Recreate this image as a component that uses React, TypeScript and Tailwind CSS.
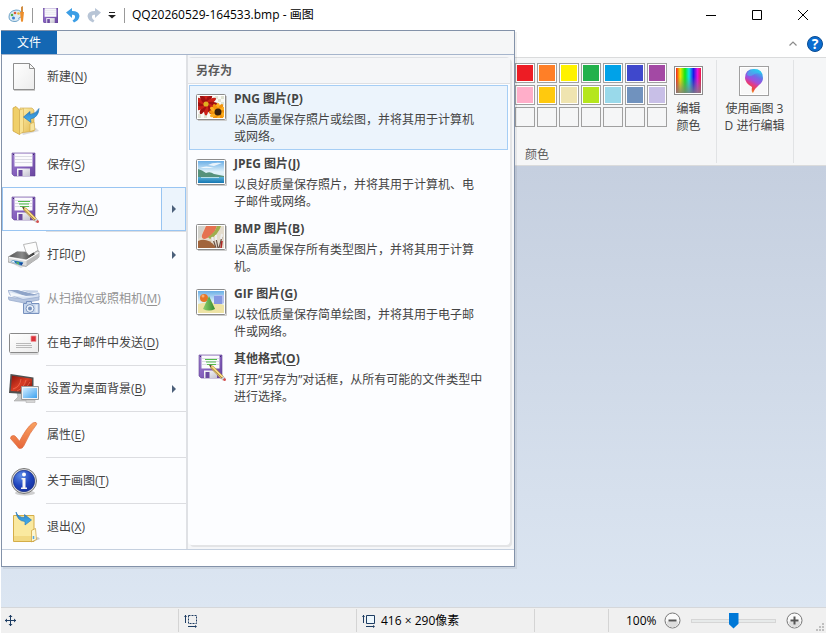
import type { ReactNode } from "react";

const swatches: (string | null)[] = [
  "bg-[#ed1c24]", "bg-[#ff7f27]", "bg-[#fff200]", "bg-[#22b14c]", "bg-[#00a2e8]", "bg-[#3f48cc]", "bg-[#a349a4]",
  "bg-[#ffaec9]", "bg-[#ffc90e]", "bg-[#efe4b0]", "bg-[#b5e61d]", "bg-[#99d9ea]", "bg-[#7092be]", "bg-[#c8bfe7]",
  null, null, null, null, null, null, null,
];

function Gradients() {
  return (
    <svg className="absolute size-0" aria-hidden="true">
      <defs>
        <linearGradient id="purple" x1="0" y1="0" x2="1" y2="1"><stop stopColor="#a184cf" /><stop offset=".5" stopColor="#8560bd" /><stop offset="1" stopColor="#6b479f" /></linearGradient>
        <linearGradient id="silver" x1="0" y1="0" x2="1" y2="1"><stop stopColor="#ffffff" /><stop offset="1" stopColor="#c4c2cf" /></linearGradient>
        <linearGradient id="paper" x1="0" y1="0" x2="1" y2="1"><stop stopColor="#ffffff" /><stop offset="1" stopColor="#ececec" /></linearGradient>
        <linearGradient id="folder" x1="0" y1="0" x2="1" y2="1"><stop stopColor="#fdf0b0" /><stop offset="1" stopColor="#e3b94e" /></linearGradient>
        <linearGradient id="blueArrow" x1="0" y1="0" x2="0" y2="1"><stop stopColor="#2b7cc4" /><stop offset="1" stopColor="#45b4f0" /></linearGradient>
        <linearGradient id="check" x1="0" y1="0" x2="0" y2="1"><stop stopColor="#f9a260" /><stop offset="1" stopColor="#e6663a" /></linearGradient>
        <radialGradient id="info" cx=".35" cy=".25" r=".8"><stop stopColor="#5c8be6" /><stop offset=".6" stopColor="#1f44bd" /><stop offset="1" stopColor="#1733a0" /></radialGradient>
        <linearGradient id="dark" x1="0" y1="0" x2="1" y2="0"><stop stopColor="#555" /><stop offset=".5" stopColor="#8a8a8a" /><stop offset="1" stopColor="#333" /></linearGradient>
        <linearGradient id="red" x1="0" y1="0" x2="1" y2="1"><stop stopColor="#8c130b" /><stop offset=".5" stopColor="#d93d24" /><stop offset="1" stopColor="#6e0d08" /></linearGradient>
        <linearGradient id="screen" x1="0" y1="0" x2="1" y2="1"><stop stopColor="#d2edff" /><stop offset="1" stopColor="#3ea2ef" /></linearGradient>
        <linearGradient id="sky" x1="0" y1="0" x2="0" y2="1"><stop stopColor="#6aaee6" /><stop offset=".5" stopColor="#e3f3fa" /><stop offset="1" stopColor="#cfe8f3" /></linearGradient>
        <linearGradient id="sea" x1="0" y1="0" x2="0" y2="1"><stop stopColor="#5ab2d8" /><stop offset="1" stopColor="#1677b3" /></linearGradient>
        <linearGradient id="cone" x1="0" y1="0" x2="1" y2="0"><stop stopColor="#8fd070" /><stop offset="1" stopColor="#358c2d" /></linearGradient>
        <linearGradient id="rainbow" x1="0" y1="0" x2="1" y2="0"><stop stopColor="#f02020" /><stop offset=".17" stopColor="#f5e500" /><stop offset=".36" stopColor="#12e512" /><stop offset=".52" stopColor="#10e5e8" /><stop offset=".7" stopColor="#1a16e8" /><stop offset=".86" stopColor="#e612d8" /><stop offset="1" stopColor="#f01840" /></linearGradient>
        <linearGradient id="fade" x1="0" y1="0" x2="0" y2="1"><stop stopColor="#808080" stopOpacity="0" /><stop offset=".35" stopColor="#808080" stopOpacity="0" /><stop offset="1" stopColor="#808080" stopOpacity=".85" /></linearGradient>
        <linearGradient id="drop" x1=".7" y1="0" x2=".3" y2="1"><stop stopColor="#1ad0f0" /><stop offset=".3" stopColor="#6f6ce8" /><stop offset=".5" stopColor="#a34ddb" /><stop offset=".65" stopColor="#e23a86" /><stop offset=".82" stopColor="#ec4a38" /><stop offset="1" stopColor="#f7b52b" /></linearGradient>
      </defs>
    </svg>
  );
}

function Icon({ children }: { children: ReactNode }) {
  return <svg viewBox="0 0 32 32" className="size-8 shrink-0" aria-hidden="true">{children}</svg>;
}

function Floppy() {
  return (
    <g>
      <path d="M4 4h23v23H6l-2-2z" fill="url(#purple)" stroke="#5f3f92" strokeWidth=".6" />
      <path d="M6.500 4.500h18v13h-18z" fill="#fbfbfd" />
      <path d="M7 7.500h17M7 10.500h17M7 13.500h17" stroke="#dcdce4" />
      <path d="M9 19.500h13v7.500H9z" fill="url(#silver)" />
      <path d="M10.500 21h4v6h-4z" fill="#6b4aa0" />
      <path d="M5 5.500h1M25 5.500h1" stroke="#3d2768" />
    </g>
  );
}

function FloppyPencil() {
  return (
    <g>
      <Floppy />
      <path d="M10 8.500h12M11 11h10M12 13.500h9" stroke="#53bb4c" strokeWidth="1.200" />
      <path d="M14.500 14l3.800 1.200 10.200 10.300-2.300 2.300L16 17.500z" fill="#f6d980" stroke="#9b7126" strokeWidth=".5" />
      <path d="M15.500 16l11.500 11" stroke="#6c4a18" strokeWidth=".6" />
      <path d="M14.500 14l2.200.7-1.300 1.400z" fill="#222" />
      <path d="M26.200 27.800l2.300-2.300 1.300 1.300-2.300 2.300z" fill="#d3d6db" stroke="#999" strokeWidth=".3" />
      <path d="M27.500 29.100l2.300-2.300q2 1.600.9 2.600-1.200 1.200-3.200-.3z" fill="#d2504f" />
    </g>
  );
}

const NewIcon = () => (
  <Icon>
    <path d="M6 29.500h21" stroke="#ccc" />
    <path d="M5.500 2.500h16l5 5v21h-21z" fill="url(#paper)" stroke="#8f8f8f" />
    <path d="M21.500 2.500v5h5z" fill="#f7f7f7" stroke="#8f8f8f" strokeLinejoin="round" />
  </Icon>
);

const OpenIcon = () => (
  <Icon>
    <path d="M13 26l15-3 3 3-16 4z" fill="#b9b9b9" opacity=".5" />
    <path d="M12 3h12l2 2v21l-14 2z" fill="url(#folder)" stroke="#cfa543" strokeWidth=".6" />
    <path d="M5 3l3-1.500 3.500 3.500v24.500L5 26z" fill="#f0cf69" stroke="#c99c33" strokeWidth=".7" />
    <path d="M11.500 5l4-1.500v23l-4 3z" fill="#f8e294" stroke="#cfa543" strokeWidth=".5" />
    <path d="M22 19l4-2 1 8-5 1.500z" fill="#f7e5a0" stroke="#c99c33" strokeWidth=".5" />
    <path d="M15.500 12l6.500-5.500v3q5.500-.5 9-6-.5 9-8.500 10.500l.5 3.500z" fill="url(#blueArrow)" stroke="#1f6db0" strokeWidth=".6" />
  </Icon>
);

const SaveIcon = () => <Icon><Floppy /></Icon>;
const SaveAsIcon = () => <Icon><FloppyPencil /></Icon>;

const PrintIcon = () => (
  <Icon>
    <path d="M3 24l10 5 17-9-2-4z" fill="#bbb" opacity=".5" />
    <path d="M15.500 5.500l12.500-2.500 2 8.500-9 5.500-3-4z" fill="#fdfdfd" stroke="#9b9b9b" strokeWidth=".7" />
    <path d="M0 18l9-5h9l3 4 8-5h2v6l-13 9.500L0 23z" fill="#dcdcdc" stroke="#7c7c7c" strokeWidth=".6" />
    <path d="M1 17.500l8-5 8.500.5 3 3.500 5-3 1.500 2-8.500 5z" fill="url(#dark)" />
    <path d="M1 18.500l17 3 12.500-8" fill="none" stroke="#fff" />
    <path d="M18.500 22v5l12-8.500v-4z" fill="#b9b9b9" />
    <path d="M2 22.500l3-1.500 10.500 2-2 4z" fill="#1f74b4" stroke="#e8e8e8" strokeWidth=".5" />
    <path d="M3 22.500l3-.8 1 2.300z" fill="#f2f8ff" /><path d="M8 23l3 .5-.5 2.300z" fill="#6bc73e" /><path d="M12 24l3 0-1.500 2.500z" fill="#1a3f9a" />
  </Icon>
);

const ScannerIcon = () => (
  <Icon>
    <path d="M0 14l8 1 23-2v4l-15 3L1 17z" fill="#b7c6e0" stroke="#94a7ca" strokeWidth=".7" />
    <path d="M0 7.500h9l16 4.500 6-2v4l-16 2.500L2 12z" fill="#d9e3f2" stroke="#93a7cb" strokeWidth=".7" />
    <path d="M1 7l8 0 21 5-13 1z" fill="#8fa4c8" />
    <path d="M2 9.500l21 4.500-20-1z" fill="#f3f7fc" />
    <path d="M13 7l17 .5v2l-8 .5z" fill="#c3d0e5" />
    <path d="M15.500 20.500h3v-2h5v2h7.500v10H15.500z" fill="#c7d6ec" stroke="#7791be" />
    <circle cx="22" cy="25.500" r="4" fill="#eef4fb" stroke="#7d96c0" /><circle cx="22" cy="25.500" r="2" fill="#7690bb" />
    <path d="M27.500 22h2v7h-2z" fill="#e6eef8" />
  </Icon>
);

const MailIcon = () => (
  <Icon>
    <path d="M2 27h28.500" stroke="#bbb" />
    <rect x="1.500" y="6.500" width="29" height="19" rx="1" fill="url(#paper)" stroke="#898989" />
    <path d="M23 9h5v5.500h-5z" fill="#d9333b" stroke="#ef9799" strokeWidth=".7" />
    <path d="M8 16.500h15M8 18.500h16M8 20.500h16" stroke="#aaa" strokeWidth=".8" />
  </Icon>
);

const DesktopIcon = () => (
  <Icon>
    <path d="M9 20h7v5l3 3H6l4-4z" fill="#c6c6c6" stroke="#999" strokeWidth=".5" />
    <path d="M2.500 1l23 3.500v17L1 20z" fill="#505050" />
    <path d="M4 2.800l20 3v13.500L2.700 18z" fill="url(#red)" />
    <path d="M5 16q7-2 8-10M9 18q7-3 9-11M14 18q5-3 8-9" fill="none" stroke="#ff8262" opacity=".7" strokeWidth=".8" />
    <path d="M18 27h9v2.500h-9z" fill="#d6d6d6" stroke="#aaa" strokeWidth=".5" />
    <path d="M13.500 13.500h17v13h-17z" fill="#f1f3f5" stroke="#9a9a9a" />
    <path d="M15 15h14v10H15z" fill="url(#screen)" />
  </Icon>
);

const CheckIcon = () => (
  <Icon>
    <path d="M2.500 19.500q0-3 3-3 1.500 0 2.500 1.500l3.500 4.200Q19 8 24.500 4.200q1.500-1 3.500-.7 1 .6.500 2Q22 13 16 26.500q-1.500 3.500-4.500 3-1.500-.5-2.500-2.500z" fill="url(#check)" stroke="#dc6a3c" strokeWidth=".7" />
  </Icon>
);

const InfoIcon = () => (
  <Icon>
    <ellipse cx="17" cy="28" rx="10" ry="2.500" fill="#b0b0b0" opacity=".6" />
    <circle cx="16" cy="16" r="12.500" fill="#dedede" stroke="#777" />
    <circle cx="16" cy="16" r="10.700" fill="url(#info)" stroke="#1a2f83" strokeWidth=".7" />
    <circle cx="16" cy="9.500" r="2" fill="#fff" />
    <path d="M13.500 13h4v9.500h1.500V24h-6v-1.500h1.500V14.500h-1z" fill="#f5f5f5" />
  </Icon>
);

const ExitIcon = () => (
  <Icon>
    <path d="M20 29l10-3 2 2-8 3z" fill="#aaa" opacity=".6" />
    <path d="M5.500 4.500H22l4 0v26H5.500z" fill="#fae9a0" stroke="#d4ad48" />
    <path d="M6 25h17v5H6z" fill="#eed176" opacity=".7" />
    <path d="M23.500 19.500l4-2 1 11-5 2.500z" fill="#fdf6d0" stroke="#ca9e36" strokeWidth=".7" />
    <path d="M25.500 25v3" stroke="#55a7e6" strokeWidth="1.500" />
    <path d="M8 1q2 5.500 8.500 5.500V3.500l7 5.500-6.500 5v-3.500Q9 10 8 1z" fill="url(#blueArrow)" stroke="#2273b5" strokeWidth=".6" />
  </Icon>
);

function Thumb({ children }: { children: ReactNode }) {
  return (
    <Icon>
      <path d="M2 26.500h28.500V2" stroke="#ccc" fill="none" />
      <rect x=".5" y=".5" width="29" height="25" rx="1" fill="#fff" stroke="#8c8c8c" />
      <svg x="2" y="2" width="26" height="22" viewBox="0 0 26 22">{children}</svg>
    </Icon>
  );
}

const petals = [0, 30, 60, 90, 120, 150, 180, 210, 240, 270, 300, 330];

const PngIcon = () => (
  <Thumb>
    <path d="M0 0h26v22H0z" fill="#f8f8f4" />
    <path d="M17 0h3v3h-3zM23 0h3v3h-3zM20 3h3v3h-3zM17 6h3v3h-3zM23 6h3v3h-3zM0 18h3v4H0zM6 18h3v4H6z" fill="#dfe3d3" />
    {petals.map((a) => <ellipse key={a} cx="8" cy="2.500" rx="2.200" ry="6" fill={a % 60 ? "#a01010" : "#cb2018"} transform={`rotate(${a} 8 8)`} />)}
    <circle cx="8" cy="8" r="2.600" fill="#e0b020" />
    {petals.map((a) => <ellipse key={a} cx="20" cy="11.500" rx="2" ry="4.500" fill={a % 60 ? "#f2930c" : "#fdb022"} transform={`rotate(${a} 20 16)`} />)}
    <circle cx="20" cy="16" r="3.500" fill="#38200c" />
  </Thumb>
);

const JpegIcon = () => (
  <Thumb>
    <path d="M0 0h26v22H0z" fill="url(#sky)" />
    <path d="M10 4q5-3 14-2l-8 3zM2 7q6-3 14 0z" fill="#fff" opacity=".8" />
    <path d="M0 8q4 1 8 4 4-2 8 1 5 1 10 2v2H0z" fill="#56927b" />
    <path d="M0 16h26v6H0z" fill="url(#sea)" />
    <path d="M3 16.500h18" stroke="#b5dfe9" />
  </Thumb>
);

const BmpIcon = () => (
  <Thumb>
    <path d="M0 0h26v22H0z" fill="#e4dccd" />
    <path d="M0 0h7L3 11l-3 2z" fill="#d3d3cd" />
    <path d="M8 0h11q-3 10-12 13-4 0-3-4z" fill="#e57251" />
    <path d="M19 0h4q-3 9-11 13l-2-2q7-4 9-11z" fill="#9eae4c" />
    <path d="M0 15q9-4 17 5v2H0z" fill="#a1643c" />
    <path d="M15 13l3 9M18 12l2 10M24 11l-3 11" stroke="#695045" strokeWidth="1.200" />
    <path d="M14 11l1.500 4M18 9v5M24 8l-1 5" stroke="#eee" strokeWidth="2" />
    <path d="M24 15l-1 7" stroke="#ac2625" strokeWidth="1.600" />
  </Thumb>
);

const GifIcon = () => (
  <Thumb>
    <path d="M0 0h26v22H0z" fill="url(#sky)" />
    <path d="M0 13q13-4 26 1v8H0z" fill="#eee3a5" />
    <path d="M16 5h8v8h-8z" fill="#8598e2" /><path d="M16 5l1-1h9l-2 1zM24 5l2-1v8l-2 1z" fill="#b3c0ef" />
    <circle cx="6" cy="7" r="4" fill="#e67528" /><circle cx="5" cy="5" r="1.500" fill="#f8ae72" />
    <path d="M11 5l6 13q-6 3-12 0z" fill="url(#cone)" />
  </Thumb>
);

const OtherIcon = () => <Icon><g transform="translate(-1 -3)"><FloppyPencil /></g></Icon>;

type Item = { label: string; hot: string; icon: () => ReactNode; arrow?: boolean; active?: boolean; disabled?: boolean; sep?: boolean };

const items: Item[] = [
  { label: "新建", hot: "N", icon: NewIcon },
  { label: "打开", hot: "O", icon: OpenIcon },
  { label: "保存", hot: "S", icon: SaveIcon },
  { label: "另存为", hot: "A", icon: SaveAsIcon, arrow: true, active: true, sep: true },
  { label: "打印", hot: "P", icon: PrintIcon, arrow: true },
  { label: "从扫描仪或照相机", hot: "M", icon: ScannerIcon, disabled: true },
  { label: "在电子邮件中发送", hot: "D", icon: MailIcon, sep: true },
  { label: "设置为桌面背景", hot: "B", icon: DesktopIcon, arrow: true, sep: true },
  { label: "属性", hot: "E", icon: CheckIcon, sep: true },
  { label: "关于画图", hot: "T", icon: InfoIcon, sep: true },
  { label: "退出", hot: "X", icon: ExitIcon },
];

const formats = [
  { label: "PNG 图片", hot: "P", icon: PngIcon, text: "以高质量保存照片或绘图，并将其用于计算机或网络。", active: true },
  { label: "JPEG 图片", hot: "J", icon: JpegIcon, text: "以良好质量保存照片，并将其用于计算机、电子邮件或网络。" },
  { label: "BMP 图片", hot: "B", icon: BmpIcon, text: "以高质量保存所有类型图片，并将其用于计算机。" },
  { label: "GIF 图片", hot: "G", icon: GifIcon, text: "以较低质量保存简单绘图，并将其用于电子邮件或网络。" },
  { label: "其他格式", hot: "O", icon: OtherIcon, text: "打开“另存为”对话框，从所有可能的文件类型中进行选择。" },
];

function Label({ label, hot }: { label: string; hot: string }) {
  return <span>{label}(<span className="underline underline-offset-2">{hot}</span>)</span>;
}

function MenuItem({ item }: { item: Item }) {
  const Glyph = item.icon;
  return (
    <li>
      <button
        disabled={item.disabled}
        className={`flex h-11 w-full items-center border text-left ${item.active ? "border-[#99c5f2]" : "border-transparent"} ${item.disabled ? "text-[#939393]" : ""}`}
      >
        <span className="flex flex-1 items-center gap-[7px] pl-[5px]">
          <Glyph />
          <Label label={item.label} hot={item.hot} />
        </span>
        {item.arrow && (
          <span className={`flex h-full w-6 items-center justify-center border-l ${item.active ? "border-[#99c5f2] bg-[#ecf4fc]" : "border-transparent"}`}>
            <svg viewBox="0 0 4 8" className="h-2 w-1" aria-hidden="true"><path d="M0 0l4 4-4 4z" fill="#4c607a" /></svg>
          </span>
        )}
      </button>
      {item.sep && <div className="ml-11 h-0.5 border-t border-[#dcdde1]" />}
    </li>
  );
}

function FileMenu() {
  return (
    <nav className="absolute top-[30px] left-px w-[514px] border border-[#8392a9] bg-[#fcfdff] text-[#444] shadow-[2px_2px_0_#0000000f]">
      <div className="flex h-6 border-b border-[#a6b5cc] bg-[#f5f6f7]">
        <button className="-ml-px w-14 bg-[#1467b3] text-white">文件</button>
      </div>
      <div className="flex border-b border-[#c5d0df]">
        <ul className="w-[184px]">
          {items.map((item) => <MenuItem key={item.hot} item={item} />)}
        </ul>
        <div className="flex-1 border-l-2 border-[#dfe1e5] bg-[#f5f6f8] pt-0.5 pr-1 pb-1">
          <section className="h-full rounded-sm border-t border-[#dfe1e5] bg-[#fcfdff] shadow-[2px_2px_0_#e3e4e6]">
            <h2 className="h-[26px] border-b border-[#dfe0e3] bg-[#f5f6f8] pl-2 leading-[26px] font-bold text-[#5a5a5a]">另存为</h2>
            <ul className="pt-px pr-0.5 pl-px">
              {formats.map(({ label, hot, icon: Glyph, text, active }) => (
                <li key={label}>
                  <button className={`flex h-[65px] w-full items-start gap-1.5 border pl-1.5 text-left ${active ? "border-[#a6cef5] bg-[#ecf4fc]" : "border-transparent"}`}>
                    <span className="pt-2"><Glyph /></span>
                    <span className="flex w-[250px] flex-col pt-1">
                      <strong className="leading-[17px]"><Label label={label} hot={hot} /></strong>
                      <span className="mt-1 leading-[17px]">{text}</span>
                    </span>
                  </button>
                </li>
              ))}
            </ul>
          </section>
        </div>
      </div>
      <div className="h-4 bg-white" />
    </nav>
  );
}

function TitleBar() {
  return (
    <header className="flex h-[30px] items-center bg-white pr-px pl-2 text-black">
      <svg viewBox="0 0 18 18" className="size-[18px]" aria-hidden="true">
        <path d="M1 11Q1 5 8 4q6 0 6 5 0 2-2 2.500-2 0-1 2-1 2-4 2-6 0-6-4.500z" fill="#ddebf5" stroke="#6ba1c8" />
        <circle cx="4" cy="9" r="1.300" fill="#4cae4c" /><circle cx="7" cy="7" r="1.300" fill="#e05b38" /><circle cx="10.500" cy="7.500" r="1.300" fill="#eab52e" /><circle cx="5.500" cy="12" r="1.500" fill="#3c7fd0" />
        <path d="M13 1l2-1v6h-2z" fill="#d18d41" /><path d="M12 6h4l-1 9q-1 2-2 0z" fill="#ed8e2c" />
      </svg>
      <span className="ml-1.5 h-[15px] w-px bg-[#999]" />
      <button className="ml-2.5" aria-label="保存"><svg viewBox="4 4 23 23" className="size-[15px]"><Floppy /></svg></button>
      <button className="ml-2" aria-label="撤消">
        <svg viewBox="0 0 14 16" className="h-4 w-3.5"><path d="M0 5.500L6 1v3q7 0 7.500 5Q13 13.500 8 15.500L6.500 13.500q3-2 2.500-4.500-.5-1.500-3-1.300V11z" fill="#3c9ee5" /></svg>
      </button>
      <button className="ml-[7px]" aria-label="重做">
        <svg viewBox="0 0 14 16" className="h-4 w-3.5"><path d="M14 5.500L8 1v3Q1 4 .5 9 1 13.500 6 15.500l1.500-2q-3-2-2.500-4.500.5-1.500 3-1.300V11z" fill="#b8c5d6" /></svg>
      </button>
      <button className="ml-[7px]" aria-label="自定义快速访问工具栏">
        <svg viewBox="0 0 8 8" className="size-2"><path d="M1 1.500h6" stroke="#222" /><path d="M0 4h8L4 7.500z" fill="#222" /></svg>
      </button>
      <span className="ml-2 h-[15px] w-px bg-[#999]" />
      <h1 className="ml-[7px] flex-1">QQ20260529-164533.bmp - 画图</h1>
      <div className="flex h-full">
        <button className="flex w-[46px] items-center justify-center" aria-label="最小化"><svg viewBox="0 0 10 10" className="size-2.5"><path d="M0 5.500h10" stroke="#000" /></svg></button>
        <button className="flex w-[46px] items-center justify-center" aria-label="最大化"><svg viewBox="0 0 10 10" className="size-2.5"><path d="M.5.5h9v9h-9z" fill="none" stroke="#000" /></svg></button>
        <button className="flex w-[46px] items-center justify-center" aria-label="关闭"><svg viewBox="0 0 10 10" className="size-2.5"><path d="M0 0l10 10M10 0L0 10" stroke="#000" /></svg></button>
      </div>
    </header>
  );
}

function Ribbon() {
  return (
    <>
      <div className="flex h-[27px] items-center justify-end gap-2.5 bg-white pr-1">
        <button aria-label="折叠功能区"><svg viewBox="0 0 8 5" className="h-[5px] w-2"><path d="M.5 4.500L4 1l3.500 3.500" fill="none" stroke="#8b8b8b" strokeWidth="1.200" /></svg></button>
        <button className="size-4 rounded-full border border-[#0a4c92] bg-[#0a6cd0] text-sm leading-[14px] font-bold text-white" aria-label="帮助">?</button>
      </div>
      <div className="mx-px flex h-[109px] border-y border-[#dadbdc] bg-[#f5f6f7] py-0.5 pl-[514px] text-[#444]">
        <section className="flex w-[202px] flex-col justify-between border-r border-[#e1e3e5]">
          <div className="flex gap-[7px]">
            <div className="grid h-16 grid-cols-7 gap-0.5 pt-[3px]">
              {swatches.map((color, i) => (
                <button key={i} aria-label={`颜色 ${i + 1}`} className="size-5 border border-[#a0a0a0] p-px">
                  <span className={`block size-full ${color ? `outline-1 outline-white ${color}` : ""}`} />
                </button>
              ))}
            </div>
            <button className="flex flex-col items-center gap-[5px] pt-1.5 leading-[17px]">
              <svg viewBox="0 0 29 29" className="size-[29px]" aria-hidden="true"><rect x=".5" y=".5" width="28" height="28" fill="#fff" stroke="#8c8c8c" /><path d="M2 2h25v25H2z" fill="url(#rainbow)" /><path d="M2 2h25v25H2z" fill="url(#fade)" /></svg>
              <span className="w-6">编辑颜色</span>
            </button>
          </div>
          <h2 className="pl-2.5 leading-[17px] text-[#5a5a5a]">颜色</h2>
        </section>
        <section className="flex w-[77px] justify-center border-r border-[#e1e3e5] pt-1.5 pr-px">
          <button className="flex flex-col items-center gap-1 leading-[17px]">
            <svg viewBox="0 0 30 30" className="size-[30px] shrink-0" aria-hidden="true">
              <rect x=".5" y=".5" width="29" height="29" fill="#f8f8f8" stroke="#a0a0a0" /><path d="M1.500 1.500h27v27h-27z" fill="none" stroke="#fff" />
              <path d="M15 3q9 0 9 9 0 4-4 7-4 3-6 8-2-1-1-6-7-4-7-9 0-9 9-9z" fill="url(#drop)" />
              <path d="M12 4q7-3 11 4-6-2-9 1-3 2-6 0 0-3 4-5z" fill="#30d4f2" opacity=".45" />
            </svg>
            <span className="text-center whitespace-nowrap">使用画图 3<br />D 进行编辑</span>
          </button>
        </section>
      </div>
    </>
  );
}

function StatusBar() {
  return (
    <footer className="mx-px mb-px flex h-[26px] border-t border-[#d5d7da] bg-[#f0f0f0] text-black">
      <div className="my-px flex w-[178px] items-center border-r border-[#d4d4d4] pl-1">
        <svg viewBox="0 0 11 11" className="size-[11px]" aria-hidden="true"><path d="M5.500 0v11M0 5.500h11" stroke="#1e3d63" /><path d="M3.500 2l2-2 2 2zM3.500 9l2 2 2-2zM2 3.500l-2 2 2 2zM9 3.500l2 2-2 2z" fill="#1e3d63" /></svg>
      </div>
      <div className="my-px flex w-[178px] items-center border-r border-[#d4d4d4] pl-[5px]">
        <SizeIcon dashed />
      </div>
      <div className="my-px flex w-[178px] items-center gap-[5px] border-r border-[#d4d4d4] pl-[5px]">
        <SizeIcon />
        <span>416 × 290像素</span>
      </div>
      <div className="my-px flex-1 border-r border-[#d4d4d4]" />
      <div className="flex w-[217px] items-center pl-[17px]">
        <label htmlFor="zoom" className="w-[38px]">100%</label>
        <button aria-label="缩小" className="flex"><ZoomGlyph /></button>
        <input
          id="zoom"
          type="range"
          defaultValue={50}
          className="mx-2.5 h-4 w-[85px] appearance-none bg-transparent [&::-webkit-slider-runnable-track]:h-1 [&::-webkit-slider-runnable-track]:border [&::-webkit-slider-runnable-track]:border-[#d6d6d6] [&::-webkit-slider-runnable-track]:bg-[#e7eaea] [&::-webkit-slider-thumb]:-mt-[7px] [&::-webkit-slider-thumb]:h-4 [&::-webkit-slider-thumb]:w-2.5 [&::-webkit-slider-thumb]:appearance-none [&::-webkit-slider-thumb]:bg-[#0078d7] [&::-webkit-slider-thumb]:[clip-path:polygon(0_0,100%_0,100%_70%,50%_100%,0_70%)]"
        />
        <button aria-label="放大" className="flex"><ZoomGlyph plus /></button>
        <svg viewBox="0 0 8 8" className="mr-0.5 mb-0.5 ml-auto size-2 self-end" aria-hidden="true"><path d="M6 0h2v2H6zM3 3h2v2H3zM6 3h2v2H6zM0 6h2v2H0zM3 6h2v2H3zM6 6h2v2H6z" fill="#bfbfbf" /></svg>
      </div>
    </footer>
  );
}

function SizeIcon({ dashed }: { dashed?: boolean }) {
  return (
    <svg viewBox="0 0 14 14" className="size-3.5" aria-hidden="true">
      <path d="M1.500 1v8M4 12.500h8" stroke="#1e3d63" /><path d="M0 3l1.500-2L3 3zM11 11l2 1.500-2 1.500z" fill="#1e3d63" />
      <path d="M4.500 1.500h8v8h-8z" fill={dashed ? "none" : "#edf7fd"} stroke="#1e3d63" strokeDasharray={dashed ? "2 1" : undefined} />
    </svg>
  );
}

function ZoomGlyph({ plus }: { plus?: boolean }) {
  return (
    <svg viewBox="0 0 17 17" className="size-[17px]" aria-hidden="true">
      <circle cx="8.500" cy="8.500" r="7.500" fill="#fafafa" stroke="#777" />
      <path d="M2.500 9.500h12a6 6 0 0 1-12 0z" fill="#ddd" />
      <path d={plus ? "M4.500 8.500h8M8.500 4.500v8" : "M4.500 8.500h8"} stroke="#555" strokeWidth="2" />
    </svg>
  );
}

export default function App() {
  return (
    <div className="relative flex min-h-screen flex-col bg-white font-['Open_Sans','Noto_Sans_CJK_SC',sans-serif] text-xs">
      <Gradients />
      <TitleBar />
      <Ribbon />
      <main className="mx-px flex-1 bg-linear-to-b from-[#c5cfdf] to-[#dce6f2]" />
      <StatusBar />
      <FileMenu />
    </div>
  );
}
